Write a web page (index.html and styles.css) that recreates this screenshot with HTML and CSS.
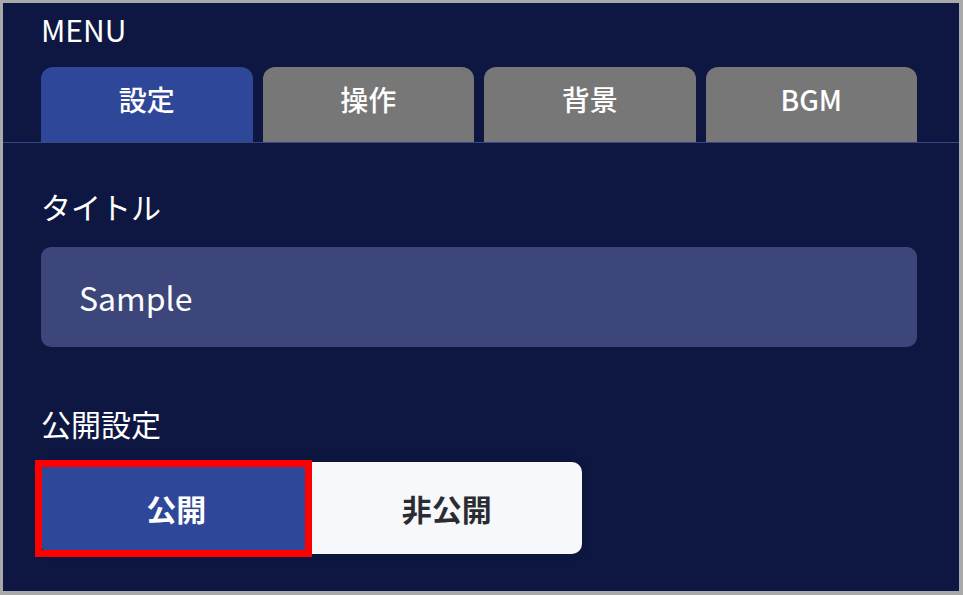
FILE: index.html
```html
<!DOCTYPE html>
<html lang="ja">
<head>
<meta charset="utf-8">
<title>MENU</title>
<link rel="stylesheet" href="styles.css">
</head>
<body>
<div class="panel">
  <div class="header">
    <div class="menu-title">MENU</div>
    <div class="tabs">
      <div class="tab active">設定</div>
      <div class="tab">操作</div>
      <div class="tab">背景</div>
      <div class="tab">BGM</div>
    </div>
  </div>
  <div class="divider"></div>
  <div class="content">
    <div class="label label-title">タイトル</div>
    <div class="input">Sample</div>
    <div class="label label-public">公開設定</div>
    <div class="toggle">
      <div class="seg seg-on">公開</div>
      <div class="seg seg-off">非公開</div>
      <div class="highlight"></div>
    </div>
  </div>
</div>
</body>
</html>
```
FILE: styles.css
```css
html, body {
  margin: 0;
  padding: 0;
}
body {
  background: #a9a9a9;
  height: 595px;
  overflow: hidden;
  font-family: "Noto Sans CJK JP", "Noto Sans", sans-serif;
  color: #ffffff;
}
.panel {
  margin: 3px 4px 0 3px;
  height: 588px;
  background: #0e1741;
  overflow: hidden;
}
.header {
  padding: 11px 42px 0 38px;
}
.menu-title {
  font-size: 30px;
  line-height: 30px;
  height: 30px;
}
.tabs {
  display: flex;
  gap: 10px;
  margin-top: 23px;
}
.tab {
  flex: 1;
  height: 75px;
  box-sizing: border-box;
  padding-top: 18px;
  text-align: center;
  font-size: 28px;
  line-height: 28px;
  font-weight: 500;
  background: #777777;
  border-radius: 12px 12px 0 0;
}
.tab.active {
  background: #2f4799;
}
.divider {
  height: 1px;
  background: #3a4582;
}
.content {
  padding: 0 42px 0 38px;
}
.label {
  font-size: 30px;
  line-height: 30px;
  height: 30px;
}
.label-title {
  margin-top: 48px;
}
.input {
  margin-top: 26px;
  height: 100px;
  box-sizing: border-box;
  background: #3d467a;
  border-radius: 10px;
  display: flex;
  align-items: center;
  padding-left: 38px;
  font-size: 32px;
  line-height: 32px;
}
.label-public {
  margin-top: 61px;
}
.toggle {
  position: relative;
  margin-top: 24px;
  width: 541px;
  height: 92px;
  display: flex;
  border-radius: 10px;
  box-shadow: 0 0 6px rgba(0, 0, 0, 0.25);
}
.seg {
  flex: 1;
  display: flex;
  align-items: center;
  justify-content: center;
  font-size: 30px;
  line-height: 30px;
  font-weight: 700;
}
.seg-on {
  background: #2f4799;
  color: #ffffff;
  border-radius: 10px 0 0 10px;
}
.seg-off {
  background: #f7f8fb;
  color: #2b2c31;
  border-radius: 0 10px 10px 0;
}
.highlight {
  position: absolute;
  left: -6px;
  top: -2px;
  width: 277px;
  height: 97px;
  box-sizing: border-box;
  border: 7px solid #ff0000;
}
```
